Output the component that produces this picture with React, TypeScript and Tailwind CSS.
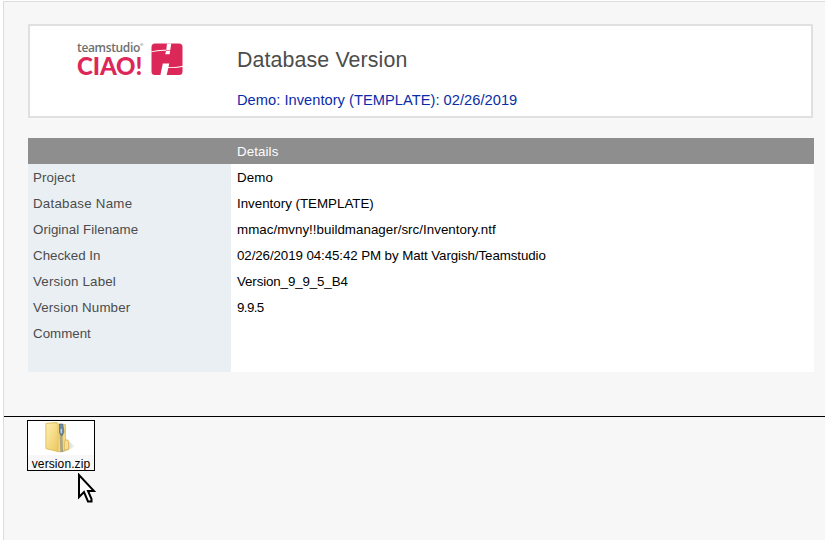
const rows = [
  { label: 'Project', value: 'Demo', l: 'tracking-[0.1px]', v: 'tracking-[0.15px]' },
  { label: 'Database Name', value: 'Inventory (TEMPLATE)', l: 'tracking-[0.23px]', v: 'tracking-[0px]' },
  { label: 'Original Filename', value: 'mmac/mvny!!buildmanager/src/Inventory.ntf', l: 'tracking-[0.04px]', v: 'tracking-[0.03px]' },
  { label: 'Checked In', value: '02/26/2019 04:45:42 PM by Matt Vargish/Teamstudio', l: 'tracking-[0px]', v: 'tracking-[-0.09px]' },
  { label: 'Version Label', value: 'Version_9_9_5_B4', l: 'tracking-[0.17px]', v: 'tracking-[-0.12px]' },
  { label: 'Version Number', value: '9.9.5', l: 'tracking-[0.12px]', v: 'tracking-[-0.6px]' },
  { label: 'Comment', value: '', l: 'tracking-[0px]', v: '' },
];

function CiaoLogo() {
  return (
    <div className="ml-[47px] mt-[15px] flex w-[106px] justify-between whitespace-nowrap">
      <div className="w-[68px] font-['Open_Sans','Noto_Sans',sans-serif]">
        <div className="flex h-[14px] text-[12px] leading-[13px] font-semibold tracking-[-0.35px] text-[#6f6f6f]">
          teamstudio<span className="text-[4px] leading-[8px]">®</span>
        </div>
        <div className="font-['Lato','Open_Sans',sans-serif] text-[24px] leading-[21px] font-black tracking-[-0.1px] text-[#dc2859]">CIAO!</div>
      </div>
      <svg className="mt-[2px] h-[33px] w-[32px] shrink-0" viewBox="0 0 32 33">
        <rect x="0.5" y="0.5" width="31" height="31.5" rx="3.5" fill="#dc2859" />
        <path d="M16 0.5H20.3L18.6 11.2H14.2L15.1 7.8Q7 7.5 0 9.3V8.5Q7 6.4 15.3 6.8ZM11.8 20.5H18.3L17.5 24.1Q26 24.4 32 22.7V23.7Q26 25.4 17.3 25L15.6 32.5H9.3Z" fill="#fff" />
        <path d="M15 7.4H19.8" stroke="#dc2859" strokeWidth="0.7" />
      </svg>
    </div>
  );
}

function ZipFolder() {
  return (
    <svg className="ml-[14px] block h-[34px] w-[34px]" viewBox="0 0 34 34">
      <defs>
        <linearGradient id="front" x1="0" y1="0" x2="1" y2="1">
          <stop offset="0" stopColor="#fff0b0" />
          <stop offset="1" stopColor="#ecc75e" />
        </linearGradient>
        <linearGradient id="shade" x1="0" x2="1">
          <stop offset="0" stopColor="#888" stopOpacity="0.8" />
          <stop offset="1" stopColor="#bbb" stopOpacity="0.1" />
        </linearGradient>
      </defs>
      <path d="M20 30L26 20L33 25Q28 29 20 31Z" fill="url(#shade)" />
      <path d="M4 2.5L15 1.5L16 3L23.5 3.5V19Q26.5 18 26.5 21V28.5L18 31L4 27.5Z" fill="#f4d77d" stroke="#dbb75a" strokeWidth="0.7" />
      <path d="M4 2.5L15 1.8L16 4V30.5L4 27.5Z" fill="url(#front)" stroke="#ddb954" strokeWidth="0.6" />
      <path d="M22.5 29V21Q22.5 19 24.5 19T26.5 21V28Z" fill="#f7df91" stroke="#dbb75a" strokeWidth="0.7" />
      <path d="M18.7 3.5L19.7 31" stroke="#657786" strokeWidth="2.8" strokeDasharray="1 1" />
      <path d="M17.5 3h3.2l1.3 8-2 4-2.5-3z" fill="#6f8ca5" stroke="#3d5269" strokeWidth="0.5" />
      <path d="M19.2 8v4" stroke="#eef" strokeWidth="1" />
    </svg>
  );
}

export default function App() {
  return (
    <div className="relative h-[540px] w-[825px] overflow-hidden bg-white pt-px pl-[3px] font-['Liberation_Sans',Arial,sans-serif]">
      <div className="h-[539px] border-t border-l border-[#dcdcdc] bg-[#f7f7f7]">
        <header className="mt-[22px] ml-[24px] flex h-[94px] w-[785px] border-2 border-[#e0e0e0] bg-white">
          <div className="w-[207px]"><CiaoLogo /></div>
          <div className="whitespace-nowrap">
            <h1 className="mt-[22px] text-[21.33px] leading-[24px] tracking-[0.13px] text-[#4c4c4c]">Database Version</h1>
            <p className="mt-[19px] text-[14.67px] leading-[18px] tracking-[0.03px] text-[#0a2ca8]">Demo: Inventory (TEMPLATE): 02/26/2019</p>
          </div>
        </header>
        <section className="mt-[20px] ml-[24px] w-[786px] bg-white text-[13.33px] leading-[28px] whitespace-nowrap text-black">
          <div className="h-[26px] bg-[#8e8e8e] pl-[209px] tracking-[0.1px] text-white">Details</div>
          {rows.map((r) => (
            <div key={r.label} className="flex h-[26px] last:h-[52px]">
              <div className="w-[203px] bg-[#eaeff3] pl-[5px] text-[#4c4c4c]"><span className={r.l}>{r.label}</span></div>
              <div className="pl-[6px]"><span className={r.v}>{r.value}</span></div>
            </div>
          ))}
        </section>
        <div className="mt-[44px] h-px bg-black" />
        <div className="mt-[3px] ml-[23px] h-[51px] w-[68px] border border-black">
          <div className="h-[34px] bg-white"><ZipFolder /></div>
          <div className="text-center text-[12px] leading-[18px] tracking-[0.1px] whitespace-nowrap text-black">version.zip</div>
        </div>
      </div>
      <svg className="absolute top-[473px] left-[77px] h-[31px] w-[19px]" viewBox="0 0 19 31">
        <path d="M2 2V24L7 19L11 28.5H14.5V26L11 18H17Z" fill="#fff" stroke="#000" strokeWidth="2" />
      </svg>
    </div>
  );
}
